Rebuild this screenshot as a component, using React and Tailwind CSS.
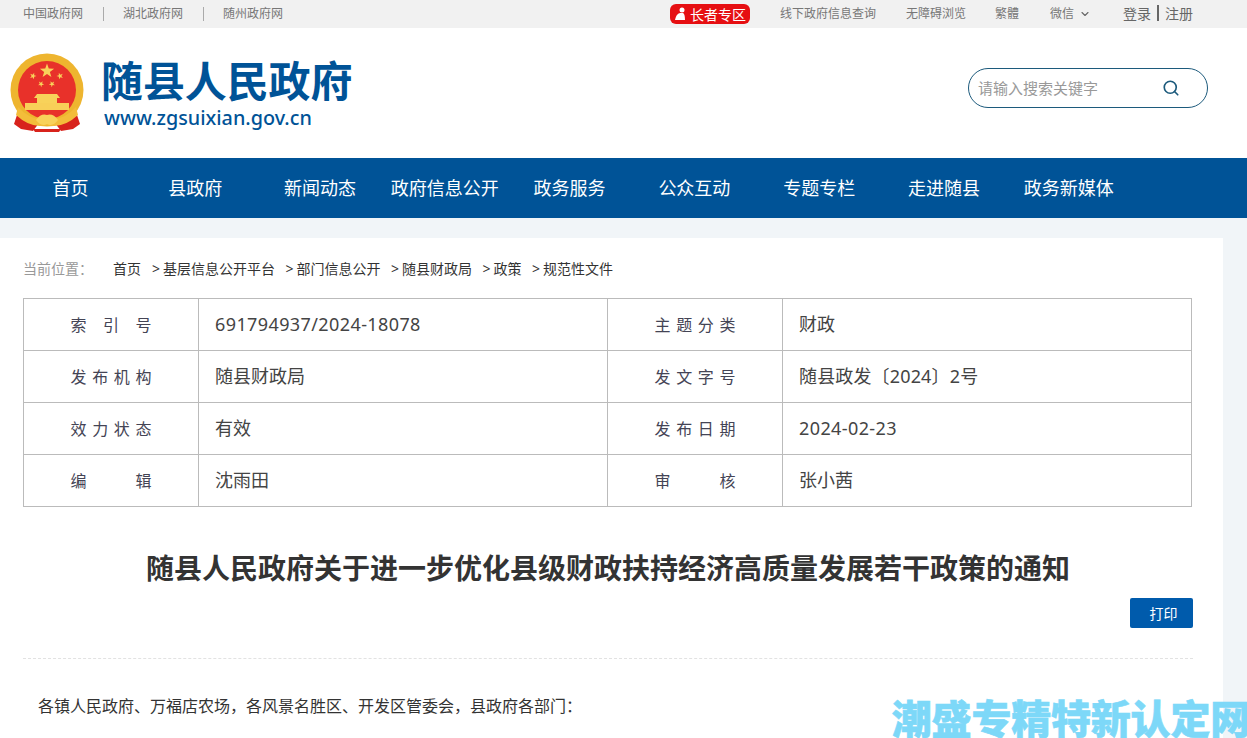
import { ChevronDown, Search } from "lucide-react";

const navItems = ["首页", "县政府", "新闻动态", "政府信息公开", "政务服务", "公众互动", "专题专栏", "走进随县", "政务新媒体"];
const crumbs = ["基层信息公开平台", "部门信息公开", "随县财政局", "政策", "规范性文件"];
const rows = [
  [["索", "引", "号"], "691794937/2024-18078", ["主", "题", "分", "类"], "财政"],
  [["发", "布", "机", "构"], "随县财政局", ["发", "文", "字", "号"], "随县政发〔2024〕2号"],
  [["效", "力", "状", "态"], "有效", ["发", "布", "日", "期"], "2024-02-23"],
  [["编", "辑"], "沈雨田", ["审", "核"], "张小茜"],
];

function Star({ cx, cy, r, rot = 0 }) {
  const pts = [];
  for (let i = 0; i < 10; i++) {
    const rad = i % 2 ? r * 0.4 : r;
    const a = ((i * 36 - 90 + rot) * Math.PI) / 180;
    pts.push(`${cx + rad * Math.cos(a)},${cy + rad * Math.sin(a)}`);
  }
  return <polygon points={pts.join(" ")} fill="#f8d25a" />;
}

function Emblem() {
  return (
    <svg width="76" height="80" viewBox="0 0 76 80" className="shrink-0">
      <path d="M10 56 L5 71 L12 76 L24 78 L30 70 L22 58 Z" fill="#d8231c" />
      <path d="M66 56 L71 71 L64 76 L52 78 L46 70 L54 58 Z" fill="#d8231c" />
      <circle cx="38" cy="37" r="36.5" fill="#eeb52f" />
      <circle cx="38" cy="37" r="29" fill="#e8312a" />
      <Star cx={38} cy={18} r={7.5} />
      <Star cx={24} cy={23} r={3.5} rot={20} />
      <Star cx={51} cy={23} r={3.5} rot={-20} />
      <Star cx={32} cy={31} r={3.2} rot={30} />
      <Star cx={43} cy={31} r={3.2} rot={-30} />
      <path d="M28 41 H48 L51 45 H25 Z" fill="#f8d25a" />
      <rect x="28" y="45" width="20" height="5" fill="#f8d25a" />
      <path d="M16 50 H60 V57 H16 Z" fill="#f8cf58" />
      <path d="M9 54 Q24 70 38 64 Q52 70 67 54 L69 62 Q54 76 38 72 Q22 76 7 62 Z" fill="#f3bd3a" />
      <path d="M27 67 Q32 60 38 62 Q44 60 49 67 Q44 74 38 71 Q32 74 27 67 Z" fill="#f8d25a" />
      <path d="M24 76 H52 L50 79 H26 Z" fill="#d8231c" />
    </svg>
  );
}

function Label({ chars }) {
  return (
    <div className="mx-auto flex w-[81px] justify-between text-[16px] text-[#445]">
      {chars.map((c) => (
        <span key={c}>{c}</span>
      ))}
    </div>
  );
}

// digits in the reference run a little wider than Noto's
function Value({ text }) {
  if (/^[\d/-]+$/.test(text)) return <span className="tracking-[0.4px]">{text}</span>;
  if (/\d/.test(text)) return <span className="tracking-[0.15px]">{text}</span>;
  return <span>{text}</span>;
}

export default function App() {
  return (
    <div className="relative h-[738px] overflow-hidden bg-[#f1f5f8] font-['Noto_Sans','Noto_Sans_CJK_SC',sans-serif]">
      <div className="flex h-[28px] items-center justify-between bg-[#f1f1f1] pl-[23px] pr-[54px] text-[12px] text-[#777]">
        <div className="flex items-center">
          <span>中国政府网</span>
          <span className="ml-[20px] mr-[19px] h-[14px] w-px bg-[#aaa]" />
          <span>湖北政府网</span>
          <span className="ml-[20px] mr-[19px] h-[14px] w-px bg-[#aaa]" />
          <span>随州政府网</span>
        </div>
        <div className="flex items-center">
          <div className="mr-[30px] flex h-[20px] w-[80px] items-center justify-center gap-[3px] rounded-md bg-[#e60f12] text-[14px] text-white">
            <svg width="13" height="14" viewBox="0 0 13 14" fill="#fff">
              <circle cx="8" cy="3" r="2.5" />
              <path d="M1 13 Q2 7 6 6 H9 Q11 7 11 13 Z" />
            </svg>
            <span>长者专区</span>
          </div>
          <span>线下政府信息查询</span>
          <span className="ml-[30px]">无障碍浏览</span>
          <span className="ml-[29px]">繁體</span>
          <span className="ml-[31px]">微信</span>
          <ChevronDown size={12} strokeWidth={2.2} className="ml-[5px] text-[#666]" />
          <div className="ml-[32px] mt-[-2px] flex items-center text-[14px] text-[#666]">
            <span>登录</span>
            <span className="mx-[6px] h-[16px] w-[2px] bg-[#666]" />
            <span>注册</span>
          </div>
        </div>
      </div>

      <header className="flex h-[130px] items-center justify-between bg-white pl-[9px] pr-[39px]">
        <div className="flex items-center">
          <Emblem />
          <div className="ml-[16px]">
            <div className="text-[42px] font-bold leading-[50px] tracking-[-0.1px] text-[#005397]">随县人民政府</div>
            <div className="ml-[3px] text-[19.8px] font-medium leading-[24px] text-[#005397]">www.zgsuixian.gov.cn</div>
          </div>
        </div>
        <div className="mt-[-10px] flex h-[40px] w-[240px] items-center justify-between rounded-full border border-[#1c5a7c] bg-white pl-[9px] pr-[27px] text-[15px] text-[#999]">
          <span>请输入搜索关键字</span>
          <Search size={18} strokeWidth={2.2} className="text-[#1c5a7c]" />
        </div>
      </header>

      <nav className="grid h-[60px] grid-cols-[repeat(9,124.8px)] items-center bg-[#005397] px-[8px] text-center text-[18px] text-white">
        {navItems.map((item) => (
          <span key={item}>{item}</span>
        ))}
      </nav>

      <main className="mt-[20px] w-[1223px] bg-white px-[23px] pb-[40px] pt-[20px]">
        <div className="flex h-[20px] items-center text-[14px] text-[#333]">
          <span className="w-[90px] text-[#999]">当前位置：</span>
          <span className="mr-[11px]">首页</span>
          <div className="flex gap-[10.5px]">
            {crumbs.map((c) => (
              <span key={c} className="flex">
                <span className="w-[11px]">&gt;</span>
                {c}
              </span>
            ))}
          </div>
        </div>

        <table className="mt-[20px] w-[1168px] table-fixed border-collapse text-[#444]">
          <colgroup>
            <col className="w-[175px]" />
            <col className="w-[409px]" />
            <col className="w-[175px]" />
            <col className="w-[409px]" />
          </colgroup>
          <tbody>
            {rows.map((row) => (
              <tr key={row[1]} className="h-[52px]">
                <td className="border border-[#bbb] text-center">
                  <Label chars={row[0]} />
                </td>
                <td className="border border-[#bbb] pl-[16px] text-[18px]">
                  <Value text={row[1]} />
                </td>
                <td className="border border-[#bbb] text-center">
                  <Label chars={row[2]} />
                </td>
                <td className="border border-[#bbb] pl-[16px] text-[18px]">
                  <Value text={row[3]} />
                </td>
              </tr>
            ))}
          </tbody>
        </table>

        <h1 className="mt-[39px] w-[1170px] text-center text-[28px] font-bold leading-[44px] text-[#333]">
          随县人民政府关于进一步优化县级财政扶持经济高质量发展若干政策的通知
        </h1>
        <div className="mt-[8px] flex w-[1170px] justify-end">
          <button className="h-[30px] w-[63px] rounded-[2px] bg-[#005bac] pl-[4px] text-[14px] text-white">打印</button>
        </div>
        <div className="mt-[30px] w-[1170px] border-t border-dashed border-[#e2e2e2]" />
        <p className="mt-[35px] pl-[15px] text-[16px] leading-[24px] text-[#333]">
          各镇人民政府、万福店农场，各风景名胜区、开发区管委会，县政府各部门：
        </p>
      </main>

      <div className="absolute bottom-[-6px] right-[-3px] text-[40px] font-black leading-[50px] tracking-[-0.2px] text-[#7dd8f8] [-webkit-text-stroke:0.6px_#7dd8f8]">
        潮盛专精特新认定网
      </div>
    </div>
  );
}
